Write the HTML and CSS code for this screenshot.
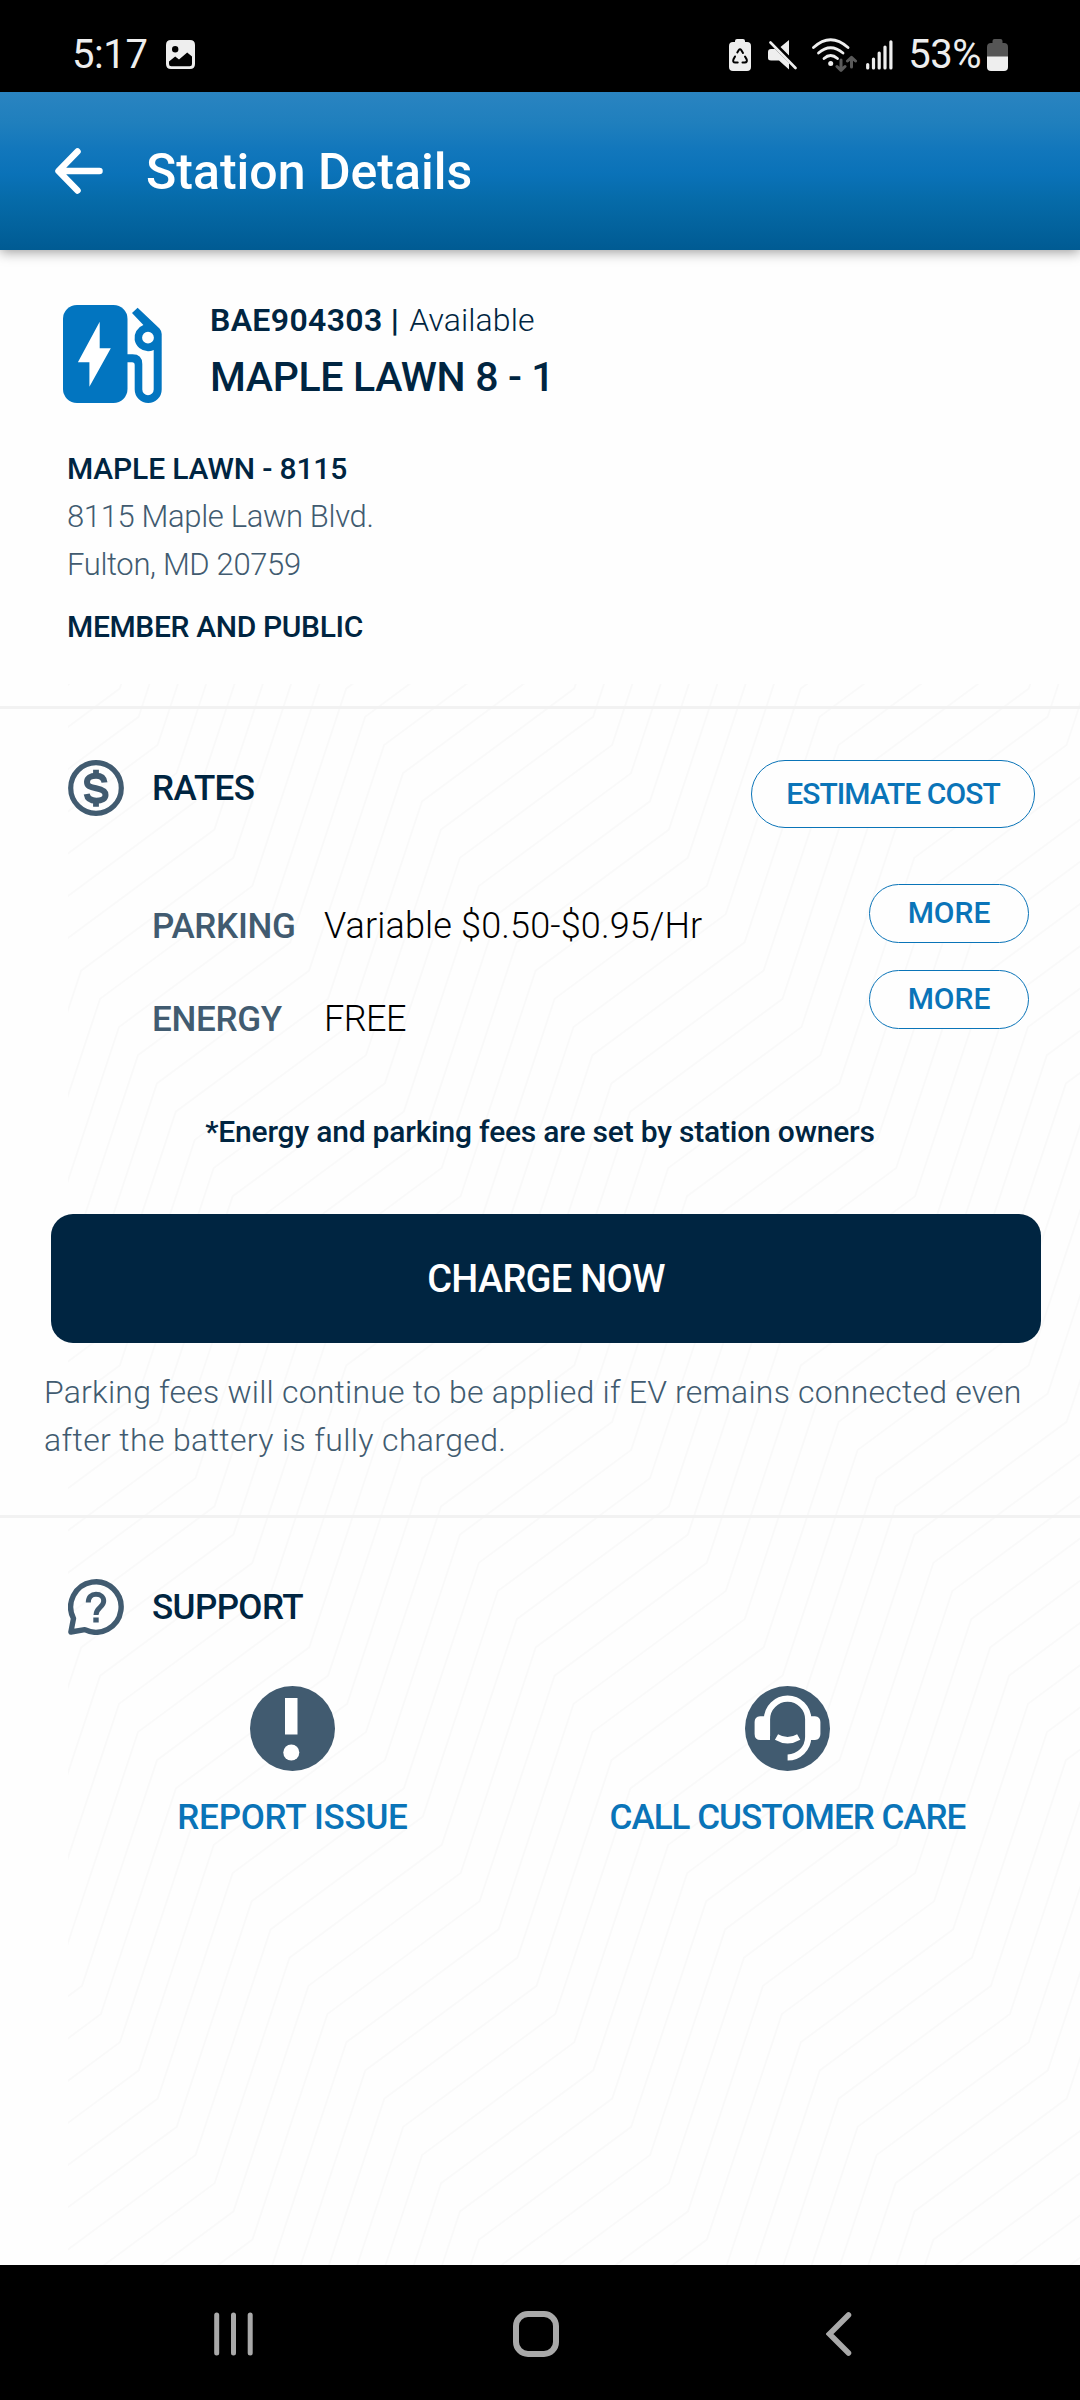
FILE: index.html
```
<!DOCTYPE html>
<html lang="en">
<head>
  <meta charset="UTF-8">
  <title>Station Details</title>
  <meta name="viewport" content="width=device-width, initial-scale=1.0" />
  <link rel="stylesheet" href="styles.css">
</head>
<body>
  <!-- Status bar -->
  <div class="status-bar">
    <span class="clock">5:17</span>
    <svg class="status-picture" width="29" height="29" viewBox="0 0 29 29">
      <path fill="#eee" fill-rule="evenodd" d="M5 0H24Q29 0 29 5V24Q29 29 24 29H5Q0 29 0 24V5Q0 0 5 0ZM9.2 6A3.2 3.2 0 1 0 9.2 12.4A3.2 3.2 0 1 0 9.2 6ZM3 21.5V24Q3 26.3 5.3 26.3H23.7Q26 26.3 26 24V16.5L21.2 12.6L13 19.5L9.2 16.5Z"/>
    </svg>
    <div class="status-right">
      <svg class="status-saver" width="22" height="32" viewBox="0 0 22 32">
        <path fill="#eee" d="M6 3V2Q6 0 8 0H14Q16 0 16 2V3H18Q22 3 22 7V28Q22 32 18 32H4Q0 32 0 28V7Q0 3 4 3Z"/>
        <g fill="none" stroke="#000" stroke-width="2" stroke-linecap="round">
          <path d="M8.3 13.5L9.8 11Q11 9.3 12.2 11L14 14"/>
          <path d="M16 17.5L17.7 20.5Q18.5 23.3 15.8 23.5H13.5"/>
          <path d="M8.7 23.5H6.2Q3.5 23.3 4.4 20.5L6 17.5"/>
        </g>
      </svg>
      <svg class="status-mute" width="29" height="30" viewBox="0 0 29 30">
        <path fill="#eee" d="M12.5 7L21 0V15.5ZM0 12Q0 9 3 9H7L21 23V29.5L11 20.5H3Q0 20.5 0 18Z"/>
        <path stroke="#eee" stroke-width="2.6" stroke-linecap="round" d="M2.5 2.5L27.5 28"/>
      </svg>
      <svg class="status-wifi" width="45" height="34" viewBox="0 0 45 34">
        <g fill="none" stroke="#eee" stroke-width="2.8" stroke-linecap="round">
          <path d="M1.5 9.5Q18.5 -6 36 9.5"/>
          <path d="M6.5 15Q18.5 4.5 31 15"/>
          <path d="M12 20.5Q18.5 14.5 25.5 20.5"/>
        </g>
        <circle cx="18.7" cy="25.5" r="2.5" fill="#eee"/>
        <path fill="none" stroke="#5a5a5a" stroke-width="3" stroke-linecap="round" stroke-linejoin="round" d="M29 22V32M25 28.5L29 32.3L33 28.5M39.5 29V20M35.5 23L39.5 19.3L43.5 23"/>
      </svg>
      <svg class="status-signal" width="27" height="30" viewBox="0 0 27 30">
        <path stroke="#eee" stroke-width="3.2" stroke-linecap="round" d="M1.7 24.5V28M7.5 19V28M13.2 13V28M19 7V28M24.9 1.8V28"/>
      </svg>
      <span class="percent">53%</span>
      <svg class="status-battery" width="21" height="32" viewBox="0 0 21 32">
        <path fill="#555" d="M5.5 4V2Q5.5 0 7.5 0H13.5Q15.5 0 15.5 2V4H17Q21 4 21 8V18H0V8Q0 4 4 4Z"/>
        <path fill="#eee" d="M0 17.5H21V28Q21 32 17 32H4Q0 32 0 28Z"/>
      </svg>
    </div>
  </div>

  <header>
    <svg width="48" height="46" viewBox="0 0 48 46">
      <path fill="none" stroke="#fff" stroke-width="6.5" stroke-linecap="round" stroke-linejoin="round" d="M22.5 3.5L3.5 23L22.5 42.5M4 23H44.5"/>
    </svg>
    <h1>Station Details</h1>
  </header>

  <main>
    <!-- Background lines, filled in below -->
    <svg class="bg-lines" width="1012" height="1581" viewBox="68 684 1012 1581">
      <path id="bg-path"/>
    </svg>

    <!-- Station -->
    <section class="station">
      <div class="station-head">
        <svg width="99" height="98" viewBox="0 0 99 98">
          <rect width="64.5" height="98" rx="14" fill="#0275c0"/>
          <path fill="#fff" d="M36.7 16.7V43.3H47.8L26.4 81.7V57.3H14.9Z"/>
          <path fill="#0275c0" fill-rule="evenodd" d="M74.6 2.7L96.5 23.5Q98.7 26 98.7 29V84.5A13.5 13.5 0 0 1 71.7 84.5V60Q71.7 57.3 69 57.3H63V49.3H69.5Q79.3 49.3 79.3 59V84.5A5.7 5.7 0 0 0 90.7 84.5V45Q88 46.2 85 46.2A13.5 13.5 0 0 1 80.4 20L69 8ZM85 26.8A5.9 5.9 0 1 0 85 38.6A5.9 5.9 0 1 0 85 26.8Z"/>
        </svg>
        <div class="station-title">
          <p><b>BAE904303 <i>|</i></b> Available</p>
          <h2>MAPLE LAWN 8 - 1</h2>
        </div>
      </div>
      <div class="address">
        <p class="site-name">MAPLE LAWN - 8115</p>
        <p>8115 Maple Lawn Blvd.</p>
        <p>Fulton, MD 20759</p>
        <p class="access">MEMBER AND PUBLIC</p>
      </div>
    </section>

    <!-- Rates -->
    <section class="rates">
      <div class="section-head">
        <svg width="56" height="56" viewBox="0 0 56 56" fill="none" stroke="#415b70">
          <circle cx="28" cy="28" r="25.3" stroke-width="5.2"/>
          <path stroke-width="6" d="M36.5 22.5C36 18 33 15.7 28 15.7C22.5 15.7 19 18.3 19 22C19 26 22 27.2 28 28.3C34.5 29.5 37.5 31.5 37.5 35C37.5 38.5 34 40.7 28.3 40.7C22.5 40.7 19.3 38.3 18.7 34"/>
          <path stroke-width="5.8" d="M28 9.7V16M28 40.5V46.7"/>
        </svg>
        <h3>RATES</h3>
        <button class="pill estimate">ESTIMATE COST</button>
      </div>
      <div class="rates-body">
        <dl>
          <dt>PARKING</dt><dd>Variable $0.50-$0.95/Hr</dd>
          <dt>ENERGY</dt><dd class="free">FREE</dd>
        </dl>
        <div class="more-buttons">
          <button class="pill more">MORE</button>
          <button class="pill more">MORE</button>
        </div>
      </div>
      <p class="note">*Energy and parking fees are set by station owners</p>
      <button class="charge-btn">CHARGE NOW</button>
      <p class="fees">Parking fees will continue to be applied if EV remains connected even <span>after the battery is fully charged.</span></p>
    </section>

    <!-- Support -->
    <section class="support">
      <div class="section-head">
        <svg width="56" height="56" viewBox="0 0 56 56" fill="none" stroke="#415b70">
          <path stroke-width="5.4" stroke-linejoin="round" d="M5.5 39.5A25.2 25.2 0 1 1 16.8 50.6L2.9 53Z"/>
          <path stroke-width="5" d="M20.3 23.5C20.3 18 23.5 15.3 28 15.3C32.5 15.3 35.7 18 35.7 22C35.7 28.5 28 28.5 28 36"/>
          <path stroke-width="5.4" d="M28 38.5V43.5"/>
        </svg>
        <h3>SUPPORT</h3>
      </div>
      <div class="support-actions">
        <a>
          <svg width="85" height="85" viewBox="0 0 85 85">
            <circle cx="42.5" cy="42.5" r="42.5" fill="#415b70"/>
            <path fill="#fff" d="M35 12H47.5V48.5H35Z"/>
            <circle cx="41.3" cy="66.5" r="8" fill="#fff"/>
          </svg>
          <span>REPORT ISSUE</span>
        </a>
        <a>
          <svg width="85" height="85" viewBox="0 0 85 85">
            <circle cx="42.5" cy="42.5" r="42.5" fill="#415b70"/>
            <g fill="none" stroke="#fff" stroke-width="6.2">
              <path d="M22 50V33.3A20.6 20.6 0 0 1 63.2 33.3V51A20.6 20.6 0 0 1 42.6 71.5"/>
              <path d="M31.5 51Q42.6 57.5 53.7 51"/>
            </g>
            <path fill="#fff" d="M25 30.3H15Q9.6 31 9.6 36V48Q9.6 54 15.5 54H25ZM61 30.3H70Q75.4 31 75.4 36V48Q75.4 53.5 70 54H61Z"/>
          </svg>
          <span class="care">CALL CUSTOMER CARE</span>
        </a>
      </div>
    </section>
  </main>

  <!-- Android navigation -->
  <nav>
    <svg width="39" height="44" viewBox="0 0 39 44">
      <path stroke="#a9a9a9" stroke-width="5" stroke-linecap="round" d="M2.7 3V41M19.5 3V41M36.2 3V41"/>
    </svg>
    <svg class="nav-home" width="46" height="46" viewBox="0 0 46 46">
      <rect x="3" y="3" width="40" height="40" rx="12" fill="none" stroke="#a9a9a9" stroke-width="6"/>
    </svg>
    <svg width="26" height="44" viewBox="0 0 26 44">
      <path fill="none" stroke="#a9a9a9" stroke-width="5.5" stroke-linecap="round" d="M22.5 3L3.5 22L22.5 41"/>
    </svg>
  </nav>

  <script>
    // Parallel zigzag lines, each one shifted by (18.94, 28.2) from the last
    let d = '';
    for (let i = -75; i < 75; i++) {
      let x = 460.7 + 18.94 * i + 227.2 * 6;
      let y = 1873 + 28.2 * i - 338.4 * 6;
      d += `M${x.toFixed(1)} ${y.toFixed(1)}`;
      for (let j = 0; j < 12; j++) {
        d += 'l-152.2 112.8l-75 225.6';
      }
    }
    document.getElementById('bg-path').setAttribute('d', d);
  </script>
</body>
</html>
```
FILE: styles.css
```
:root {
  --blue: #0a74b8;
  --navy: #002541;
  --slate: #415b70;
  --divider: #f2f2f2;
}

* {
  margin: 0;
  padding: 0;
  box-sizing: border-box;
}

body {
  width: 1080px;
  height: 2400px;
  display: flex;
  flex-direction: column;
  background-color: #fefefe;
  color: var(--navy);
  font-family: Roboto, Arial, sans-serif;
}

svg {
  display: block;
  flex: none;
}

/* Status bar */
.status-bar {
  height: 92px;
  padding: 17px 72px 0 72px;
  display: flex;
  align-items: center;
  background-color: #000;
  color: #eee;
  font-size: 40px;
}
.clock {
  letter-spacing: -0.4px;
}
.status-picture {
  margin-left: 18px;
}
.status-right {
  margin-left: auto;
  display: flex;
  align-items: center;
}
.status-saver {
  margin-right: 17px;
}
.status-mute {
  margin-right: 15px;
}
.status-wifi {
  margin-right: 9px;
}
.status-signal {
  margin-right: 15px;
}
.percent {
  letter-spacing: -0.5px;
  margin-right: 6px;
}

/* Header */
header {
  height: 158px;
  padding-left: 55px;
  display: flex;
  align-items: center;
  gap: 43px;
  color: #fff;
  background: linear-gradient(#2a84c1 0%, #1f7fbd 20%, #1277bc 36%, #0a72b8 52%, #066ba9 68%, #005b93 100%);
  box-shadow: 0 2px 12px rgba(0, 0, 0, 0.4);
  position: relative;
  z-index: 1;
}
header svg {
  margin-top: -1px;
}
header h1 {
  font-size: 50px;
  font-weight: 500;
  padding-top: 2px;
}

/* Sections */
main {
  flex: 1;
  position: relative;
}
.bg-lines {
  position: absolute;
  top: 434px;
  left: 68px;
}
#bg-path {
  fill: none;
  stroke: rgba(0, 0, 0, 0.02);
  stroke-width: 2;
}

section {
  position: relative;
}

.section-head {
  display: flex;
  align-items: flex-start;
  padding: 0 45px 0 68px;
}
.section-head h3 {
  margin-left: 28px;
  font-size: 35px;
  font-weight: 500;
  line-height: 57px;
  letter-spacing: -0.6px;
}

/* Station */
.station {
  height: 459px;
  padding: 45px 63px 0;
  border-bottom: 3px solid var(--divider);
}
.station-head {
  display: flex;
  gap: 48px;
}
.station-head svg {
  margin-top: 10px;
}
.station-title p {
  font-size: 32px;
  font-weight: 300;
  line-height: 50px;
  letter-spacing: 0.1px;
}
.station-title b {
  font-weight: 600;
  letter-spacing: 0.35px;
}
.station-title i {
  font-style: normal;
  font-weight: 700;
  margin-right: 2px;
}
.station-title h2 {
  font-size: 41px;
  font-weight: 500;
  line-height: 65px;
  letter-spacing: -0.35px;
}

.address {
  margin: 35px 0 0 4px;
  font-size: 31px;
  font-weight: 300;
  line-height: 48px;
  letter-spacing: -0.35px;
  color: var(--slate);
}
.address .site-name,
.address .access {
  font-size: 30px;
  font-weight: 500;
  color: var(--navy);
}
.address .site-name {
  letter-spacing: -0.15px;
}
.address .access {
  margin-top: 14px;
}

/* Rates */
.rates {
  height: 809px;
  padding-top: 51px;
  border-bottom: 3px solid var(--divider);
}

.pill {
  padding-bottom: 2px;
  background-color: #fefefe;
  border: 1px solid var(--blue);
  border-radius: 34px;
  color: var(--blue);
  font-family: inherit;
  font-size: 30px;
  font-weight: 500;
}
.estimate {
  width: 284px;
  height: 68px;
  margin-left: auto;
  letter-spacing: -0.95px;
}
.more {
  width: 160px;
  height: 59px;
  padding-bottom: 3px;
}

.rates-body {
  display: flex;
  justify-content: space-between;
  margin-top: 52px;
  padding: 0 51px 0 152px;
}
.rates-body dl {
  display: grid;
  grid-template-columns: 172px auto;
  line-height: 93px;
}
.rates-body dt {
  font-size: 35px;
  font-weight: 500;
  letter-spacing: -0.3px;
  color: var(--slate);
}
.rates-body dd {
  font-size: 36px;
  font-weight: 300;
  color: #000;
  letter-spacing: 0.15px;
}
.rates-body .free {
  letter-spacing: -0.5px;
}
.more-buttons {
  display: flex;
  flex-direction: column;
  gap: 27px;
  padding-top: 4px;
}

.note {
  margin-top: 42px;
  text-align: center;
  font-size: 30px;
  font-weight: 500;
  line-height: 48px;
  letter-spacing: -0.2px;
}

.charge-btn {
  display: block;
  width: 990px;
  height: 129px;
  margin: 58px 0 0 51px;
  background-color: var(--navy);
  border: none;
  border-radius: 22px;
  color: #fff;
  font-family: inherit;
  font-size: 38px;
  font-weight: 500;
  letter-spacing: -0.7px;
}

.fees {
  margin: 25px 0 0 44px;
  font-size: 32px;
  font-weight: 300;
  line-height: 48px;
  letter-spacing: 0.2px;
  color: var(--slate);
}
.fees span {
  display: block;
  letter-spacing: 0.36px;
}

/* Support */
.support {
  padding-top: 61px;
}
.support-actions {
  display: grid;
  grid-template-columns: 1fr 1fr;
  margin-top: 50px;
  padding: 0 45px;
}
.support-actions a {
  display: flex;
  flex-direction: column;
  align-items: center;
  gap: 22px;
  color: var(--blue);
  font-size: 35px;
  font-weight: 500;
  line-height: 49px;
  letter-spacing: -0.25px;
}
.support-actions .care {
  letter-spacing: -0.98px;
}

/* Android navigation */
nav {
  height: 135px;
  display: flex;
  align-items: center;
  padding: 3px 0 0 214px;
  background-color: #000;
}
.nav-home {
  margin: 0 267px 0 260px;
}
```
